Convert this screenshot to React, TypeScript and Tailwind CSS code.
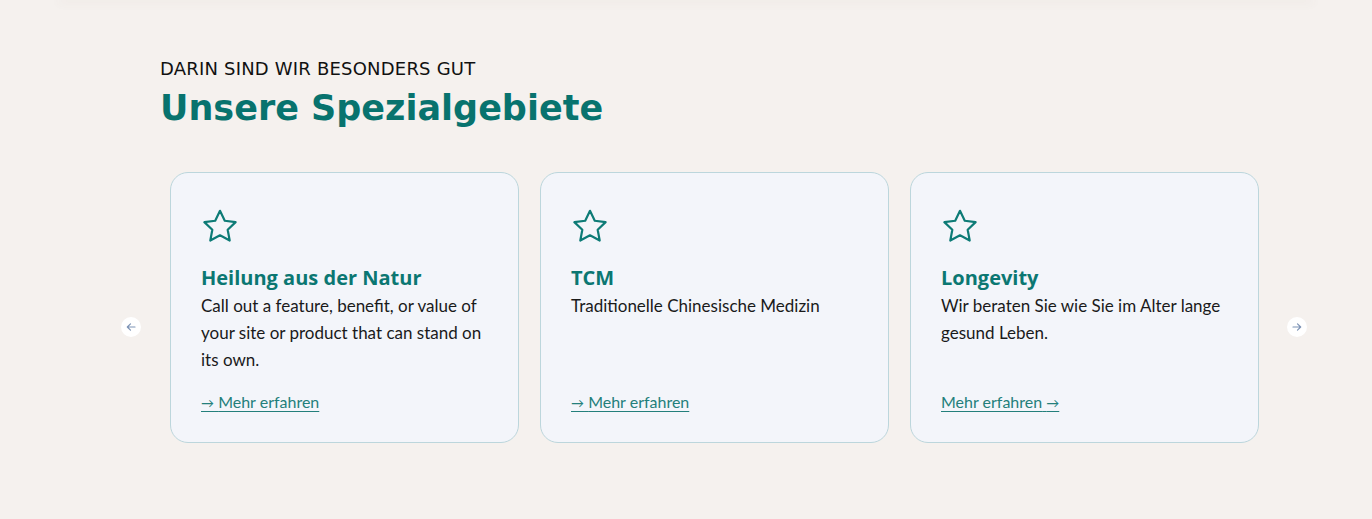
import React from "react";

type Card = {
  title: string;
  text: string;
  link: string;
  arrowAfter?: boolean;
};

const cards: Card[] = [
  {
    title: "Heilung aus der Natur",
    text: "Call out a feature, benefit, or value of your site or product that can stand on its own.",
    link: "Mehr erfahren",
  },
  {
    title: "TCM",
    text: "Traditionelle Chinesische Medizin",
    link: "Mehr erfahren",
  },
  {
    title: "Longevity",
    text: "Wir beraten Sie wie Sie im Alter lange gesund Leben.",
    link: "Mehr erfahren",
    arrowAfter: true,
  },
];

const displayFont = { fontFamily: '"DejaVu Sans", "Open Sans", sans-serif' };
const titleFont = { fontFamily: '"Open Sans", "Noto Sans", sans-serif' };
const bodyFont = { fontFamily: 'Lato, "Noto Sans", sans-serif' };

function StarIcon() {
  return (
    <svg width="38" height="36" viewBox="0 0 24 23" fill="none" stroke="#0d7b76" strokeWidth="1.4" strokeLinejoin="round">
      <path d="M12 1.8l3.05 6.35 6.95.9-5.1 4.85 1.3 6.9L12 17.45 5.8 20.8l1.3-6.9L2 9.05l6.95-.9z" />
    </svg>
  );
}

function ArrowButton({ dir }: { dir: "left" | "right" }) {
  return (
    <button className="w-5 h-5 rounded-full bg-white flex items-center justify-center shrink-0">
      <svg width="12" height="12" viewBox="0 0 12 12" fill="none" stroke="#7d93b5" strokeWidth="1.2" strokeLinecap="round" strokeLinejoin="round">
        {dir === "left" ? (
          <path d="M10 6H2.5M5.5 2.8L2.3 6l3.2 3.2" />
        ) : (
          <path d="M2 6h7.5M6.5 2.8L9.7 6 6.5 9.2" />
        )}
      </svg>
    </button>
  );
}

function FeatureCard({ card }: { card: Card }) {
  return (
    <div className="w-[349px] h-[271px] shrink-0 rounded-[18px] border border-[#bcd6dc] bg-[#f3f5fa] pl-[30px] pr-[24px] pt-[35px] pb-[27px] flex flex-col">
      <StarIcon />
      <h3 className="mt-[20px] text-[20px] leading-[28px] font-bold text-[#0b7772]" style={titleFont}>
        {card.title}
      </h3>
      <p className="mt-[0px] text-[17px] leading-[27px] text-[#1a1a1a]" style={bodyFont}>
        {card.text}
      </p>
      <a href="#" className="mt-auto text-[16px] leading-[24px] text-[#237f7b] underline underline-offset-[3px] decoration-[1px]" style={bodyFont}>
        {card.arrowAfter ? (
          <>
            {card.link} <span className="text-[13px]">→</span>
          </>
        ) : (
          <>
            <span className="text-[13px]">→</span> {card.link}
          </>
        )}
      </a>
    </div>
  );
}

export default function App() {
  return (
    <div className="w-full min-h-[519px] bg-[#f5f1ee] overflow-hidden">
      <div className="mx-[58px] h-[2px] -mt-[2px] shadow-[0_2px_10px_rgba(120,100,90,0.12)]" />
      <div className="pl-[160px] pt-[57px]">
        <p className="text-[18px] leading-[23px] tracking-[0.2px] text-[#111]" style={displayFont}>
          DARIN SIND WIR BESONDERS GUT
        </p>
        <h2 className="mt-[5px] text-[35px] leading-[46px] font-bold text-[#08736e]" style={displayFont}>
          Unsere Spezialgebiete
        </h2>
      </div>
      <div className="flex items-start pl-[121px] mt-[41px]">
        <div className="mt-[145px]">
          <ArrowButton dir="left" />
        </div>
        <div className="flex gap-[21px] ml-[29px]">
          {cards.map((c) => (
            <FeatureCard key={c.title} card={c} />
          ))}
        </div>
        <div className="ml-[28px] mt-[145px]">
          <ArrowButton dir="right" />
        </div>
      </div>
    </div>
  );
}
